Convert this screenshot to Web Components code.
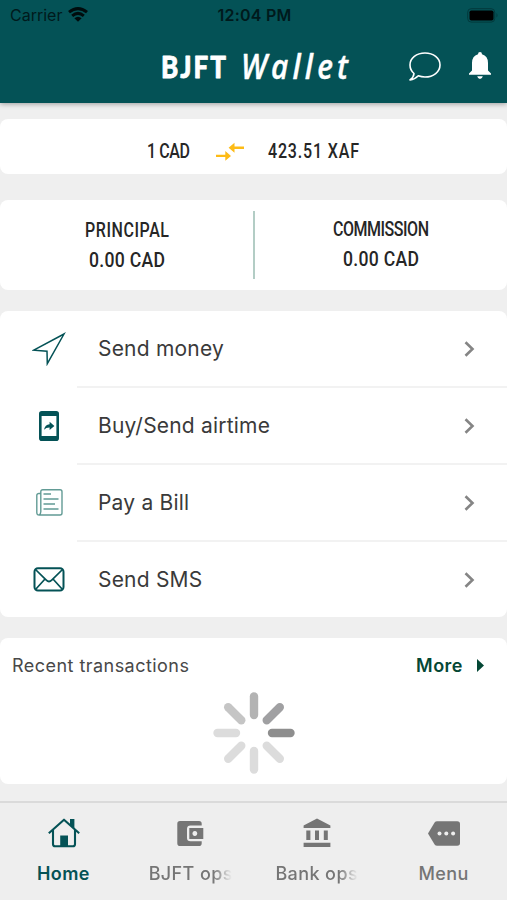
<!DOCTYPE html>
<html lang="en">
<head>
<meta charset="utf-8">
<title>BJFT Wallet</title>
<style>
body{
  margin: 0;
  background: #efefef;
  font-family: Inter, "Liberation Sans", sans-serif;
}
</style>
</head>
<body>
<wallet-app></wallet-app>
<script>
const define = (name, template) => {
  customElements.define(name, class extends HTMLElement {
    constructor() {
      super();
      this.attachShadow({ mode: "open" });
      this.shadowRoot.innerHTML = typeof template === "function" ? template(this) : template;
    }
  });
};

const icons = {
  wifi: `<svg width="20" height="15" viewBox="0 0 20 15" fill="none" stroke="#000c0d" stroke-width="3"><path d="M1 5.2Q10-2 19 5.2M4.2 8.8Q10 3.9 15.8 8.8"/><path d="M6.4 11.3Q10 8.3 13.6 11.3L10 14.8Z" fill="#000c0d" stroke="none"/></svg>`,
  battery: `<svg width="32" height="15" viewBox="0 0 32 15"><rect x=".7" y=".7" width="27" height="13.4" rx="3.5" fill="none" stroke="#03393c"/><rect x="2.5" y="2.5" width="24" height="10" rx="1.8"/><path d="M29.5 5q2 2.3 0 4.6z" fill="#03393c"/></svg>`,
  chat: `<svg width="32" height="29" viewBox="0 0 32 29" fill="none" stroke="#fff" stroke-width="1.6" stroke-linejoin="round"><path d="M16 1C24.5 1 31 6.2 31 13S24.5 25 16 25Q12.5 25 9.3 23.8Q5.7 27.6 1 28Q4.8 25 5 21.5Q1 18 1 13C1 6.2 7.5 1 16 1Z"/></svg>`,
  bell: `<svg width="22" height="27" viewBox="0 0 22 27" fill="#fff"><path d="M11 0Q13 0 13 2.2Q19 3.8 19 11V18.5L22 21.5V22.8H0V21.5L3 18.5V11Q3 3.8 9 2.2Q9 0 11 0ZM8.2 24.3H13.8Q13.2 27 11 27T8.2 24.3Z"/></svg>`,
  swap: `<svg width="28" height="20" viewBox="0 0 28 20"><path d="M28 4.5V7H18.5V10.8L12.6 5.7L18.5.8V4.5ZM0 12.7H9.3V9L15 13.9L9.3 18.8V15.1H0Z" fill="#fdbb16"/></svg>`,
  send: `<svg width="34" height="34" viewBox="0 0 34 34" fill="none" stroke="#045256" stroke-width="1.5" stroke-linejoin="miter"><path d="M32 2L1.8 18.2L15 19.2L15.3 31.7Z"/></svg>`,
  airtime: `<svg width="20" height="30" viewBox="0 0 20 30"><path fill-rule="evenodd" d="M2.8 0H17.2Q20 0 20 2.8V27.2Q20 30 17.2 30H2.8Q0 30 0 27.2V2.8Q0 0 2.8 0ZM2.6 5V25H17.4V5Z" fill="#045256"/><path d="M5 18.7Q6 13.6 10.6 13.3V10.8L15.4 15L10.6 19V16.6Q7.2 16.5 5 18.7Z" fill="#045256"/></svg>`,
  bill: `<svg width="27" height="27" viewBox="0 0 27 27" fill="none" stroke="#629b95" stroke-width="1.4"><path d="M4.8 23V2.8Q4.8.8 6.8.8H24Q26 .8 26 2.8V24Q26 26 24 26H3.2Q.8 26 .8 23.6V6.2Q.8 4.3 4.8 4.3M4.8 22.5Q4.8 25 3.2 26M7.5 5H15M7.5 10H22.5M7.5 15H19M7.5 20H22.5"/></svg>`,
  mail: `<svg width="32" height="25" viewBox="0 0 32 25" fill="none" stroke="#045256" stroke-width="2"><rect x="1.5" y="1.2" width="29" height="22.4" rx="3.5"/><path d="M2.5 2.5L13.3 13.2Q16 15.8 18.7 13.2L29.5 2.5M2.5 22.5L12 12M29.5 22.5L20 12" stroke-width="1.7"/></svg>`,
  home: `<svg width="32" height="30" viewBox="0 0 32 30" fill="none" stroke="#045256" stroke-width="2.1" stroke-linejoin="round"><path d="M.8 15.2L16 1.7L31.2 15.2M5 12V26Q5 28.3 7.2 28.3H24.8Q27 28.3 27 26V12"/><path d="M22 1H26.4V11.2L22 7.2Z" fill="#045256" stroke="none"/><path d="M12.2 28V17.5H20V28Z" fill="#045256" stroke="none"/></svg>`,
  wallet: `<svg width="27" height="25" viewBox="0 0 27 25"><path d="M3 0H22Q24.7 0 24.7 2.8V4.6H13.5Q10 4.6 10 8V17Q10 20.3 13.5 20.3H24.7V22.2Q24.7 25 22 25H3Q.3 25 .3 22.2V2.8Q.3 0 3 0Z" fill="#757575"/><path fill-rule="evenodd" d="M12.3 7H26.3V18H12.3ZM17.8 10.1a2.4 2.4 0 1 0 .1 0Z" fill="#757575"/></svg>`,
  bank: `<svg width="28" height="30" viewBox="0 0 28 30" fill="#757575"><path d="M14 .6L27.4 7.5V10H.6V7.5ZM3.3 12.6H7.4V22H3.3ZM12 12.6H16V22H12ZM20.8 12.6H24.8V22H20.8ZM.6 24.7H27.4V29H.6Z"/></svg>`,
  menu: `<svg width="32" height="25" viewBox="0 0 32 25"><path d="M9.2.2H29.2Q32 .2 32 3V22Q32 24.8 29.2 24.8H9.2Q7.5 24.8 6.6 23.4L0 12.5L6.6 1.6Q7.5.2 9.2.2Z" fill="#757575"/><g fill="#eee"><circle cx="11.5" cy="12.5" r="2"/><circle cx="18.3" cy="12.5" r="2"/><circle cx="25.1" cy="12.5" r="2"/></g></svg>`
};

define("wallet-icon", el => `
<style>
:host{
  display: flex;
  flex: none;
}
svg{
  display: block;
}
</style>
${icons[el.getAttribute("name")]}
`);

// narrow display lettering: squeezed glyphs, spaced out to a given width
define("display-text", el => {
  const width = el.getAttribute("width");
  const size = el.getAttribute("size") || 20;
  const squeeze = el.getAttribute("squeeze") || 0.8;
  return `
<style>
:host{
  display: block;
  flex: none;
}
svg{
  display: block;
  overflow: visible;
}
text{
  font-family: var(--display-font, Roboto, sans-serif);
  font-weight: var(--display-weight, 500);
  font-style: var(--display-style, normal);
  font-size: ${size}px;
  fill: currentColor;
  stroke: currentColor;
  stroke-width: var(--display-stroke, 0);
  stroke-linejoin: round;
}
</style>
<svg width="${width}" height="${size}"><text x="0" y="${size * 0.85}" transform="scale(${squeeze} 1)" textLength="${width / squeeze}" lengthAdjust="spacing">${el.getAttribute("text")}</text></svg>
`;
});

define("status-bar", `
<style>
:host{
  display: grid;
  grid-template-columns: 1fr auto 1fr;
  align-items: center;
  height: 30px;
  padding: 0 8px 0 10px;
  color: #001a1c;
  font-size: 16px;
}
.carrier{
  display: flex;
  align-items: center;
  gap: 6px;
}
.time{
  font-weight: 600;
  letter-spacing: .2px;
}
wallet-icon{
  justify-self: end;
}
.carrier wallet-icon{
  margin-top: -2px;
}
</style>
<div class="carrier"><span>Carrier</span><wallet-icon name="wifi"></wallet-icon></div>
<span class="time">12:04 PM</span>
<wallet-icon name="battery"></wallet-icon>
`);

define("app-header", `
<style>
:host{
  display: block;
  height: 103px;
  background: #045256;
  box-shadow: 0 1px 5px rgba(0,0,0,.35);
}
.bar{
  display: flex;
  align-items: center;
  height: 73px;
  padding: 0 16px 0 161px;
  box-sizing: border-box;
  color: #fff;
}
.brand{
  --display-font: Lato, sans-serif;
  --display-weight: 900;
  --display-stroke: .8px;
  margin-top: 2px;
}
.name{
  --display-font: "Open Sans", sans-serif;
  --display-weight: 600;
  --display-style: italic;
  --display-stroke: .4px;
  margin-left: 15px;
}
.chat{
  margin: -1px 28px 0 auto;
}
.bell{
  margin-top: -2px;
}
</style>
<status-bar></status-bar>
<div class="bar">
  <display-text class="brand" text="BJFT" width="65" size="31" squeeze=".84"></display-text>
  <display-text class="name" text="Wallet" width="107" size="35" squeeze=".85"></display-text>
  <wallet-icon class="chat" name="chat"></wallet-icon>
  <wallet-icon class="bell" name="bell"></wallet-icon>
</div>
`);

define("card-panel", `
<style>
:host{
  display: block;
  box-sizing: border-box;
  background: #fff;
  border-radius: 8px;
}
</style>
<slot></slot>
`);

define("exchange-rate", `
<style>
:host{
  display: flex;
  align-items: center;
  height: 55px;
  padding: 8px 0 0 147px;
  box-sizing: border-box;
  color: #262626;
}
wallet-icon{
  margin: 2px 24px 0 26px;
}
</style>
<display-text text="1 CAD" width="43"></display-text>
<wallet-icon name="swap"></wallet-icon>
<display-text text="423.51 XAF" width="91"></display-text>
`);

define("balance-column", el => `
<style>
:host{
  display: flex;
  flex-direction: column;
  align-items: center;
  gap: 10px;
  color: #262626;
}
</style>
<display-text text="${el.getAttribute("label")}" width="${el.getAttribute("width")}"></display-text>
<display-text text="${el.getAttribute("amount")}" width="76" squeeze=".88"></display-text>
`);

define("balance-summary", `
<style>
:host{
  display: grid;
  grid-template-columns: 1fr 2px 1fr;
  height: 90px;
  padding: 11px 0;
  box-sizing: border-box;
}
i{
  background: #b3cdc5;
}
balance-column{
  padding: 9px 0 0 1px;
}
balance-column:last-child{
  padding: 8px 0 0;
}
</style>
<balance-column label="PRINCIPAL" width="84" amount="0.00 CAD"></balance-column>
<i></i>
<balance-column label="COMMISSION" width="96" amount="0.00 CAD"></balance-column>
`);

define("action-row", el => `
<style>
:host{
  display: flex;
  align-items: center;
  height: 77px;
  box-sizing: border-box;
  color: #3a3a3a;
  font-size: 21px;
}
.icon{
  display: flex;
  justify-content: center;
  width: 98px;
}
.label{
  flex: 1;
  letter-spacing: .2px;
}
.chevron{
  margin-right: 32px;
}
</style>
<div class="icon"><wallet-icon name="${el.getAttribute("icon")}"></wallet-icon></div>
<span class="label"><slot></slot></span>
<svg class="chevron" width="11" height="16" viewBox="0 0 11 16" fill="none" stroke="#858585" stroke-width="2.6"><path d="M1.5 1.2L8.5 8L1.5 14.8"/></svg>
`);

define("action-list", `
<style>
:host{
  display: block;
  height: 306px;
}
action-row:first-of-type{
  height: 75px;
}
action-row + action-row{
  padding-top: 2px;
  background: linear-gradient(#f2f2f2, #f2f2f2) 77px 0 / 100% 2px no-repeat;
}
</style>
<action-row icon="send">Send money</action-row>
<action-row icon="airtime">Buy/Send airtime</action-row>
<action-row icon="bill">Pay a Bill</action-row>
<action-row icon="mail">Send SMS</action-row>
`);

const spokes = ["#8e8e8e", "#dcdcdc", "#dcdcdc", "#dcdcdc", "#dcdcdc", "#c5c5c5", "#b3b3b3", "#a0a0a2"];

define("loading-spinner", `
<style>
:host{
  display: block;
}
svg{
  display: block;
  margin: 0 auto;
}
</style>
<svg width="82" height="82" viewBox="-41 -41 82 82" stroke-width="8.4" stroke-linecap="round">
${spokes.map((color, i) => `<path d="M18 0H36.5" stroke="${color}" transform="rotate(${i * 45})"/>`).join("")}
</svg>
`);

define("recent-transactions", `
<style>
:host{
  display: block;
  height: 146px;
}
header{
  display: flex;
  justify-content: space-between;
  align-items: center;
  height: 54px;
  padding: 0 22px 0 12px;
  font-size: 18px;
  color: #484848;
}
h2{
  margin: 0;
  font-size: 18px;
  font-weight: 400;
  letter-spacing: .46px;
}
a{
  display: flex;
  align-items: center;
  gap: 14px;
  color: #044735;
  font-weight: 600;
  letter-spacing: .5px;
}
</style>
<header>
  <h2>Recent transactions</h2>
  <a><span>More</span><svg width="8" height="13" viewBox="0 0 8 13"><path d="M0 0L7 6.5L0 13Z" fill="#044735"/></svg></a>
</header>
<loading-spinner></loading-spinner>
`);

define("nav-item", el => `
<style>
:host{
  display: flex;
  flex-direction: column;
  align-items: center;
  color: #757575;
  font-size: 18px;
  font-weight: 500;
}
:host([active]){
  color: #045256;
  font-weight: 600;
}
.icon{
  display: flex;
  align-items: center;
  height: 30px;
  margin: 15px 0 0 1px;
}
.label{
  margin-top: 15px;
  line-height: 22px;
  letter-spacing: .4px;
  white-space: nowrap;
}
:host([clipped]) .label{
  width: 83px;
  overflow: hidden;
  -webkit-mask-image: linear-gradient(90deg, #000 77%, transparent);
  mask-image: linear-gradient(90deg, #000 77%, transparent);
}
</style>
<div class="icon"><wallet-icon name="${el.getAttribute("icon")}"></wallet-icon></div>
<span class="label"><slot></slot></span>
`);

define("bottom-nav", `
<style>
:host{
  display: grid;
  grid-template-columns: repeat(4, 1fr);
  height: 99px;
  box-sizing: border-box;
  border-top: 2px solid #dadada;
  background: #eee;
}
</style>
<nav-item icon="home" active>Home</nav-item>
<nav-item icon="wallet" clipped>BJFT ops</nav-item>
<nav-item icon="bank" clipped>Bank ops</nav-item>
<nav-item icon="menu">Menu</nav-item>
`);

define("wallet-app", `
<style>
:host{
  display: flex;
  flex-direction: column;
  height: 900px;
  overflow: hidden;
}
main{
  display: flex;
  flex-direction: column;
  gap: 21px;
  padding-top: 16px;
}
.rate{
  margin-bottom: 5px;
}
bottom-nav{
  margin-top: auto;
}
</style>
<app-header></app-header>
<main>
  <card-panel class="rate"><exchange-rate></exchange-rate></card-panel>
  <card-panel><balance-summary></balance-summary></card-panel>
  <card-panel><action-list></action-list></card-panel>
  <card-panel><recent-transactions></recent-transactions></card-panel>
</main>
<bottom-nav></bottom-nav>
`);
</script>
</body>
</html>
